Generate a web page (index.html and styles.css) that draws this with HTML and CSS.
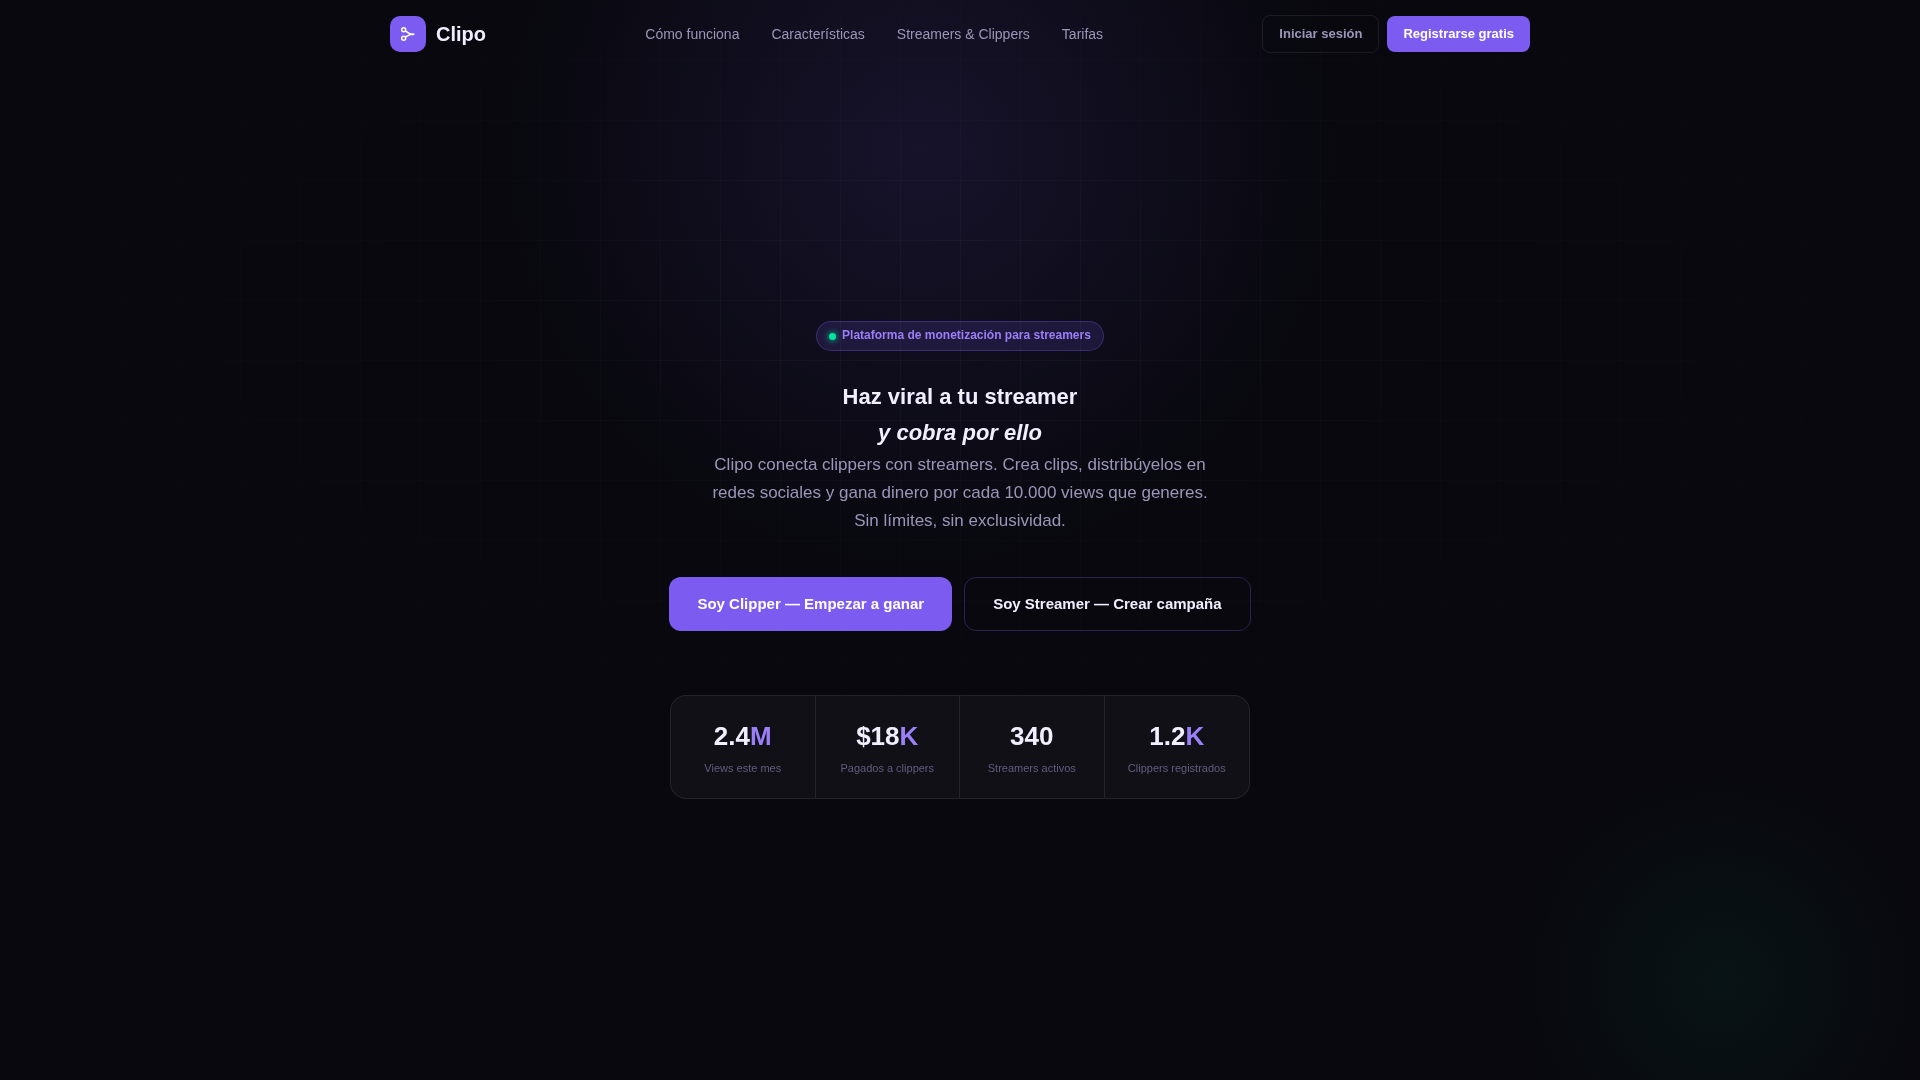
FILE: index.html
```html
<!DOCTYPE html>
<html lang="es">
<head>
<meta charset="utf-8">
<meta name="viewport" content="width=device-width, initial-scale=1">
<title>Clipo</title>
<link rel="stylesheet" href="styles.css">
</head>
<body>
<header class="nav">
  <div class="nav-inner">
    <a class="logo" href="#">
      <span class="logo-mark">
        <svg width="18" height="18" viewBox="0 0 18 18" fill="none" stroke="#fff" stroke-width="1.5" stroke-linecap="round" aria-hidden="true">
          <circle cx="4.7" cy="4.8" r="2"/>
          <circle cx="4.7" cy="13.2" r="2"/>
          <path d="M6.4 6 11.5 9.2 6.4 12.2"/>
          <path d="M11.3 9.2h3.2" stroke-width="2"/>
        </svg>
      </span>
      <span class="logo-text">Clipo</span>
    </a>
    <nav class="nav-links">
      <a href="#como-funciona">Cómo funciona</a>
      <a href="#caracteristicas">Características</a>
      <a href="#roles">Streamers &amp; Clippers</a>
      <a href="#tarifas">Tarifas</a>
    </nav>
    <div class="nav-actions">
      <button class="btn btn-ghost" type="button">Iniciar sesión</button>
      <button class="btn btn-primary" type="button">Registrarse gratis</button>
    </div>
  </div>
</header>
<main class="hero">
  <div class="badge"><span class="badge-dot"></span><span class="badge-text">Plataforma de monetización para streamers</span></div>
  <h1 class="title">Haz viral a tu streamer<br><em>y cobra por ello</em></h1>
  <p class="lead">Clipo conecta clippers con streamers. Crea clips, distribúyelos en redes sociales y gana dinero por cada 10.000 views que generes. Sin límites, sin exclusividad.</p>
  <div class="cta">
    <button class="btn-lg btn-lg-primary" type="button">Soy Clipper — Empezar a ganar</button>
    <button class="btn-lg btn-lg-outline" type="button">Soy Streamer — Crear campaña</button>
  </div>
  <div class="stats">
    <div class="stat"><div class="stat-num">2.4<span>M</span></div><div class="stat-label">Views este mes</div></div>
    <div class="stat"><div class="stat-num">$18<span>K</span></div><div class="stat-label">Pagados a clippers</div></div>
    <div class="stat"><div class="stat-num">340</div><div class="stat-label">Streamers activos</div></div>
    <div class="stat"><div class="stat-num">1.2<span>K</span></div><div class="stat-label">Clippers registrados</div></div>
  </div>
</main>
</body>
</html>
```
FILE: styles.css
```css
:root {
  --bg: #08080e;
  --text: #f0eeff;
  --muted: #9b95b8;
  --dim: #625d7e;
  --accent: #7c5cf0;
  --accent-light: #9b7ff8;
  --line: rgba(255, 255, 255, 0.08);
}

* { box-sizing: border-box; }

body {
  margin: 0;
  min-height: 100vh;
  color: var(--text);
  font-family: "Liberation Sans", Arial, sans-serif;
  background:
    radial-gradient(circle 420px at 48% 150px, rgba(124, 92, 240, 0.13), transparent),
    radial-gradient(circle 210px at calc(100% - 200px) calc(100% - 100px), rgba(0, 229, 160, 0.05), transparent),
    var(--bg);
}

/* Faint grid that fades out towards the edges */
body::before {
  content: "";
  position: fixed;
  inset: 0;
  z-index: -1;
  background-image:
    linear-gradient(rgba(255, 255, 255, 0.03) 1px, transparent 1px),
    linear-gradient(90deg, rgba(255, 255, 255, 0.03) 1px, transparent 1px);
  background-size: 60px 60px;
  mask-image: radial-gradient(ellipse 80% 60% at 50% 30%, #000, transparent 70%);
}

button { font-family: inherit; cursor: pointer; }
a { color: inherit; text-decoration: none; }

.nav {
  position: fixed;
  inset: 0 0 auto;
  padding: 0 24px;
}

.nav-inner {
  display: flex;
  align-items: center;
  justify-content: space-between;
  max-width: 1140px;
  height: 68px;
  margin: 0 auto;
}

.logo { display: flex; align-items: center; gap: 10px; }

.logo-mark {
  display: grid;
  place-items: center;
  width: 36px;
  height: 36px;
  border-radius: 10px;
  background: var(--accent);
}

.logo-text { font-size: 20px; font-weight: 700; }

.nav-links { display: flex; gap: 32px; color: var(--muted); font-size: 14px; }

.nav-actions { display: flex; align-items: center; gap: 8px; }

.btn {
  height: 36px;
  padding: 0 16px 2px;
  border: 0;
  border-radius: 8px;
  font-size: 13px;
  font-weight: 700;
}

.btn-ghost {
  height: 38px;
  border: 1px solid var(--line);
  background: transparent;
  color: var(--muted);
}

.btn-primary { background: var(--accent); color: #fff; }

.hero {
  display: flex;
  flex-direction: column;
  align-items: center;
  justify-content: center;
  min-height: 100vh;
  padding: 120px 24px 80px;
  text-align: center;
}

.badge {
  display: flex;
  align-items: center;
  gap: 6px;
  height: 30px;
  margin-bottom: 28px;
  padding: 0 12px;
  border: 1px solid rgba(124, 92, 240, 0.3);
  border-radius: 15px;
  background: rgba(124, 92, 240, 0.15);
  color: var(--accent-light);
  font-size: 12px;
  font-weight: 700;
}

.badge-dot {
  width: 7px;
  height: 7px;
  border-radius: 50%;
  background: #00e5a0;
  box-shadow: 0 0 6px #00e5a0;
}

.badge-text { padding-bottom: 2px; }

.title { margin: 0; font-size: 22px; line-height: 36px; }

.lead {
  max-width: 520px;
  margin: 0 0 42px;
  color: var(--muted);
  font-size: 17px;
  line-height: 28px;
}

.cta { display: flex; flex-wrap: wrap; justify-content: center; gap: 12px; margin-bottom: 64px; }

.btn-lg {
  height: 54px;
  padding: 0 28px 2px;
  border: 0;
  border-radius: 12px;
  font-size: 15px;
  font-weight: 700;
}

.btn-lg-primary { background: var(--accent); color: #fff; }

.btn-lg-outline {
  border: 1px solid rgba(124, 92, 240, 0.3);
  background: transparent;
  color: var(--text);
}

.stats {
  display: grid;
  grid-template-columns: repeat(4, 1fr);
  width: 100%;
  max-width: 580px;
  border: 1px solid var(--line);
  border-radius: 16px;
  background: rgba(255, 255, 255, 0.035);
}

.stat { padding: 20px 16px 21px; }
.stat:not(:last-child) { border-right: 1px solid var(--line); }

.stat-num { margin-bottom: 3px; font-size: 26px; font-weight: 700; line-height: 40px; }
.stat-num span { color: var(--accent-light); }
.stat-label { color: var(--dim); font-size: 11px; line-height: 18px; }
```
